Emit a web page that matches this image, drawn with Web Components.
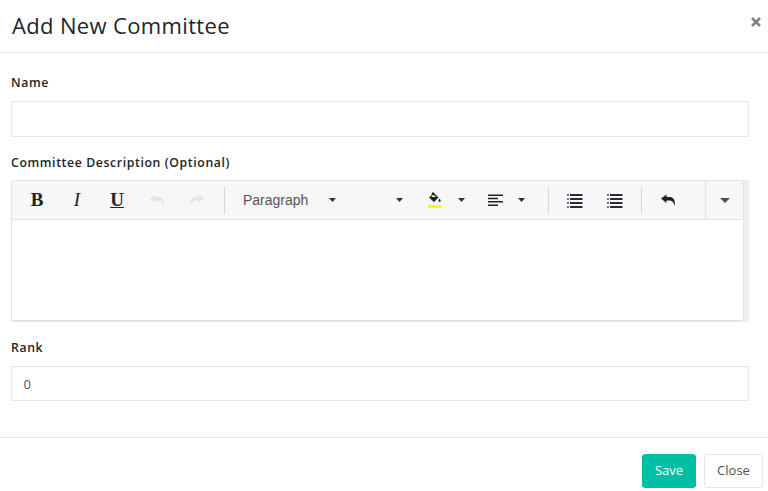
<!DOCTYPE html>
<html lang="en"><head><meta charset="utf-8"><title>Add New Committee</title>
<style>
html,body{margin:0;padding:0;background:#fff}
body{width:768px;height:491px;overflow:hidden;font-family:"Open Sans",sans-serif;color:#212529}
</style></head><body>
<committee-modal>
  <modal-header slot="header">Add New Committee</modal-header>
  <form-field label="Name" style="--gap-top:21px;--label-gap:9px"><text-input></text-input></form-field>
  <form-field label="Committee Description (Optional)" style="--gap-top:17px;--label-gap:8px"><rich-editor></rich-editor></form-field>
  <form-field label="Rank" style="--gap-top:17px;--label-gap:9px"><text-input value="0" style="height:35px"></text-input></form-field>
  <modal-footer slot="footer"><ui-button kind="primary">Save</ui-button><ui-button>Close</ui-button></modal-footer>
</committee-modal>
<script>
function def(name,css,html){
  customElements.define(name,class extends HTMLElement{
    connectedCallback(){
      if(this.shadowRoot)return;
      const r=this.attachShadow({mode:'open'});
      r.innerHTML='<style>'+css+'</style>'+(typeof html==='function'?html(this):html);
    }
  });
}
def('committee-modal',':host{display:flex;flex-direction:column;width:768px;height:491px}.body{padding:0 19px 0 11px;height:384px;box-sizing:border-box}',
 '<slot name="header"></slot><div class="body"><slot></slot></div><slot name="footer"></slot>');
def('modal-header',':host{display:flex;justify-content:space-between;height:53px;box-sizing:border-box;border-bottom:1px solid #e1e3e8;padding:0 6px 0 12px}h4{margin:0;font:400 22px/50px "Open Sans",sans-serif;color:#212529;letter-spacing:.35px}button{all:unset;width:12px;height:12px;margin-top:16px;display:block}svg{display:block}',
 '<h4><slot></slot></h4><button aria-label="Close"><svg width="12" height="12" viewBox="0 0 12 12"><path d="M2 2 L10 10 M10 2 L2 10" stroke="#838383" stroke-width="2.6"/></svg></button>');
def('form-field',':host{display:block;padding-top:var(--gap-top,16px)}label{display:block;font:600 12.25px/18px "Open Sans",sans-serif;letter-spacing:.62px;color:#212529;margin-bottom:var(--label-gap,9px)}',
 h=>'<label>'+h.getAttribute('label')+'</label><slot></slot>');
def('text-input',':host{display:block;height:36px;box-sizing:border-box;border:1px solid #e6e7e9;padding:0 11.5px;font:400 13px/34px "Open Sans",sans-serif;color:#555;background:#fff}',
 h=>'<span>'+(h.getAttribute('value')||'')+'</span>');
const i={
 undo:c=>`<svg width="16" height="14" viewBox="0 0 16 14"><path fill="${c}" d="M1 5.5 6.5 1.5V4H9.5C13 4 14.8 6.5 14.8 9.5V13.2C13.8 10 12.5 7.6 9.5 7.6H6.5V10Z"/></svg>`,
 redo:c=>`<svg width="16" height="14" viewBox="0 0 16 14"><path fill="${c}" d="M15 5.5 9.5 1.5V4H6.5C3 4 1.2 6.5 1.2 9.5V13.2C2.2 10 3.5 7.6 6.5 7.6H9.5V10Z"/></svg>`,
 caret:`<svg width="7" height="4" viewBox="0 0 7 4"><path fill="#333" d="M0 0h7L3.5 4Z"/></svg>`,
 bigcaret:`<svg width="10" height="5" viewBox="0 0 10 5"><path fill="#4a4f55" d="M0 0h10L5 5Z"/></svg>`,
 fill:`<svg width="16" height="18" viewBox="0 0 16 18"><path fill="#222" d="M6 1 7 2 11.5 6.5 7 11 2 6.5 5 3.6 4.6 2.4Z"/><path fill="#f6f7f9" d="M6.2 3.8 4 6h5.2Z"/><path fill="#222" d="M12.6 7.6c.7 1 1.1 1.6 1.1 2.2a1.1 1.1 0 0 1-2.2 0c0-.6.4-1.2 1.1-2.2Z"/><rect y="14" x="1" width="14" height="3" fill="#ffff00"/></svg>`,
 align:`<svg width="15" height="13" viewBox="0 0 15 13"><path stroke="#222" stroke-width="1.5" d="M0 1.2h15M0 4.5h10M0 7.8h15M0 11.2h10"/></svg>`,
 list:`<svg width="17" height="16" viewBox="0 0 17 16"><path stroke="#2a2d33" stroke-width="2" d="M4 3H16.5M4 7H16.5M4 11H16.5M4 15H16.5"/><path stroke="#777" stroke-width="2" d="M1 3H3M1 7H3M1 11H3M1 15H3"/></svg>`
};
def('tool-btn',':host{display:flex;align-items:center;justify-content:center;width:40px;height:38px;flex:none}svg{display:block}','<slot></slot>');
def('tool-sep',':host{display:block;width:1px;height:27px;background:#d3d6da;flex:none}','');
def('rich-editor',`:host{display:flex;width:738px;height:142px;box-sizing:border-box}
.ed{width:733px;height:142px;box-sizing:border-box;border:1px solid #e1e3e8;border-bottom-width:2px;border-radius:3px;background:#fff}
.bar{display:flex;align-items:center;height:38px;background:#f6f7f9;border-bottom:1px solid #e1e3e8;padding-left:5px;border-radius:3px 3px 0 0}
.scroll{width:5px;height:142px;background:#efefef}
.c{display:flex;align-items:center;height:38px;flex:none}
.para{font:400 14px/36px "Liberation Sans",sans-serif;color:#555;margin-left:18px;width:84px;flex:none}
.end{margin-left:auto;width:38px;height:38px;border-left:1px solid #e1e3e8;display:flex;align-items:center;justify-content:center;flex:none;box-sizing:border-box}
svg{display:block}b,i,u{font-family:"Liberation Serif",serif;font-size:19px;color:#222}`,
 ()=>`<div class="ed"><div class="bar">
 <tool-btn><b>B</b></tool-btn><tool-btn><i>I</i></tool-btn><tool-btn><u style="font-weight:700">U</u></tool-btn>
 <tool-btn>${i.undo('#e3e4e6')}</tool-btn><tool-btn>${i.redo('#e3e4e6')}</tool-btn>
 <tool-sep style="margin-left:7px"></tool-sep>
 <span class="para">Paragraph</span><span class="c" style="margin-left:2px">${i.caret}</span>
 <span class="c" style="margin-left:60px">${i.caret}</span>
 <span class="c" style="margin-left:24px">${i.fill}</span>
 <span class="c" style="margin-left:15px">${i.caret}</span>
 <span class="c" style="margin-left:23px">${i.align}</span>
 <span class="c" style="margin-left:15px">${i.caret}</span>
 <tool-sep style="margin-left:23px"></tool-sep>
 <span class="c" style="margin-left:17px">${i.list}</span>
 <span class="c" style="margin-left:23px">${i.list}</span>
 <tool-sep style="margin-left:18px"></tool-sep>
 <span class="c" style="margin-left:18px">${i.undo('#222')}</span>
 <div class="end">${i.bigcaret}</div>
 </div></div><div class="scroll"></div>`);
def('modal-footer',':host{display:flex;justify-content:flex-end;gap:8px;height:54px;box-sizing:border-box;border-top:1px solid #e1e3e8;padding:16px 5px 0 0}','<slot></slot>');
def('ui-button',':host{display:block;height:34px;box-sizing:border-box;border-radius:3px;font:400 13px/31px "Open Sans",sans-serif;text-align:center;border:1px solid #e6e7e9;color:#495057;width:59px;background:#fff}:host([kind=primary]){background:#00bfa5;border-color:#00bfa5;color:#fff;width:54px}','<slot></slot>');
</script>
</body></html>
